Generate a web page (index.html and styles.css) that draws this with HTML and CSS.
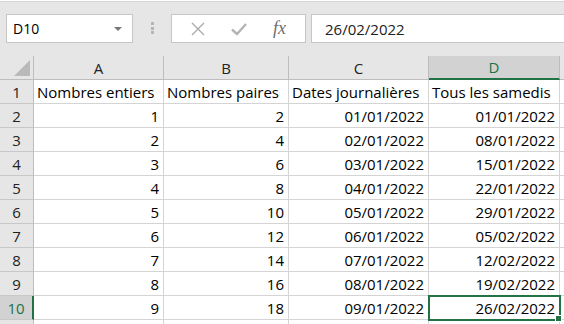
FILE: index.html
```html
<!DOCTYPE html>
<html lang="fr">
<head>
    <meta charset="UTF-8">
    <title>Classeur - Séries</title>
    <link rel="stylesheet" href="styles.css">
</head>
<body>
    <div class="toolbar">
        <div class="namebox">
            <span>D10</span>
            <span class="arrow"></span>
        </div>
        <div class="grip"><i></i><i></i><i></i></div>
        <div class="fbuttons">
            <svg class="ico" width="14" height="14" viewBox="0 0 14 14"><path d="M1 1L13 13M13 1L1 13" stroke="#ababab" stroke-width="1.4" fill="none"/></svg>
            <svg class="ico" width="16" height="14" viewBox="0 0 16 14"><path d="M1 7.5L6 12L15 2" stroke="#b4b4b4" stroke-width="2.4" fill="none"/></svg>
            <span class="fx">fx</span>
        </div>
        <div class="formula">26/02/2022</div>
    </div>

    <div class="viewport">
    <div class="sheet">
        <div class="hd corner"><span class="tri"></span></div>
        <div class="hd">A</div>
        <div class="hd">B</div>
        <div class="hd">C</div>
        <div class="hd sel-col">D</div>
        <div class="hd"></div>

        <div class="rh">1</div>
        <div class="c txt">Nombres entiers</div>
        <div class="c txt">Nombres paires</div>
        <div class="c txt">Dates journalières</div>
        <div class="c txt">Tous les samedis</div>
        <div class="c"></div>

        <div class="rh">2</div><div class="c">1</div><div class="c">2</div><div class="c">01/01/2022</div><div class="c">01/01/2022</div><div class="c"></div>
        <div class="rh">3</div><div class="c">2</div><div class="c">4</div><div class="c">02/01/2022</div><div class="c">08/01/2022</div><div class="c"></div>
        <div class="rh">4</div><div class="c">3</div><div class="c">6</div><div class="c">03/01/2022</div><div class="c">15/01/2022</div><div class="c"></div>
        <div class="rh">5</div><div class="c">4</div><div class="c">8</div><div class="c">04/01/2022</div><div class="c">22/01/2022</div><div class="c"></div>
        <div class="rh">6</div><div class="c">5</div><div class="c">10</div><div class="c">05/01/2022</div><div class="c">29/01/2022</div><div class="c"></div>
        <div class="rh">7</div><div class="c">6</div><div class="c">12</div><div class="c">06/01/2022</div><div class="c">05/02/2022</div><div class="c"></div>
        <div class="rh">8</div><div class="c">7</div><div class="c">14</div><div class="c">07/01/2022</div><div class="c">12/02/2022</div><div class="c"></div>
        <div class="rh">9</div><div class="c">8</div><div class="c">16</div><div class="c">08/01/2022</div><div class="c">19/02/2022</div><div class="c"></div>
        <div class="rh sel-row">10</div><div class="c">9</div><div class="c">18</div><div class="c">09/01/2022</div><div class="c active">26/02/2022<span class="handle"></span></div><div class="c"></div>

        <div class="rh"></div><div class="c"></div><div class="c"></div><div class="c"></div><div class="c"></div><div class="c"></div>
    </div>
    </div>
</body>
</html>
```

FILE: styles.css
```css
body { margin: 0; background: #fff; font-family: "Open Sans", "Liberation Sans", sans-serif; font-size: 15px; color: #000; overflow: hidden; }

/* barre de formule */
.toolbar { height: 55px; background: #e6e6e6; border-top: 1px solid #d4d4d4; margin-top: 1px; display: flex; align-items: flex-start; padding: 12px 0 0 6px; box-sizing: border-box; }
.namebox { width: 127px; height: 29px; box-sizing: border-box; border: 1px solid #c6c6c6; background: #fff; display: flex; align-items: center; justify-content: space-between; padding: 0 10px 0 6px; font-size: 14px; }
.arrow { width: 0; height: 0; border-left: 4px solid transparent; border-right: 4px solid transparent; border-top: 4px solid #777; }
.grip { width: 38px; display: flex; flex-direction: column; align-items: center; gap: 1.5px; padding-top: 8px; }
.grip i { width: 3px; height: 3px; background: #b4b4b4; }
.fbuttons { width: 135px; height: 29px; box-sizing: border-box; border: 1px solid #c6c6c6; background: #fff; display: flex; align-items: center; justify-content: space-around; padding: 0 6px; }
.fx { font-family: "Liberation Serif", serif; font-style: italic; font-size: 18px; color: #6e6e6e; }
.formula { flex: 1; margin-left: 5px; height: 29px; box-sizing: border-box; border: 1px solid #c6c6c6; border-right: none; background: #fff; display: flex; align-items: center; padding-left: 13px; color: #222; }

/* feuille */
.viewport { height: 268px; overflow: hidden; }
.sheet { display: grid; grid-template-columns: 34px 130px 125px 140px 131px 1fr; grid-auto-rows: 24px; }
.hd, .rh, .c { box-sizing: border-box; border-right: 1px solid #d4d4d4; border-bottom: 1px solid #d4d4d4; display: flex; align-items: center; white-space: nowrap; overflow: hidden; }
.hd { background: #e6e6e6; justify-content: center; border-right-color: #bdbdbd; border-bottom-color: #bdbdbd; color: #222; }
.rh { background: #e6e6e6; justify-content: center; border-right-color: #bdbdbd; border-bottom-color: #c8c8c8; color: #222; }
.corner { position: relative; }
.tri { position: absolute; right: 3px; bottom: 3px; width: 0; height: 0; border-left: 16px solid transparent; border-bottom: 16px solid #b9b9b9; }
.sel-col { background: #d2d2d2; color: #217346; border-bottom: 2px solid #217346; }
.sel-row { background: #d2d2d2; color: #217346; border-right: 2px solid #217346; }
.c { justify-content: flex-end; padding-right: 4px; }
.c.txt { justify-content: flex-start; padding-left: 3px; }
.active { position: relative; overflow: visible; outline: 2px solid #217346; outline-offset: -1px; }
.handle { position: absolute; right: -3px; bottom: -3px; width: 5px; height: 5px; background: #217346; border: 1px solid #fff; }
```
